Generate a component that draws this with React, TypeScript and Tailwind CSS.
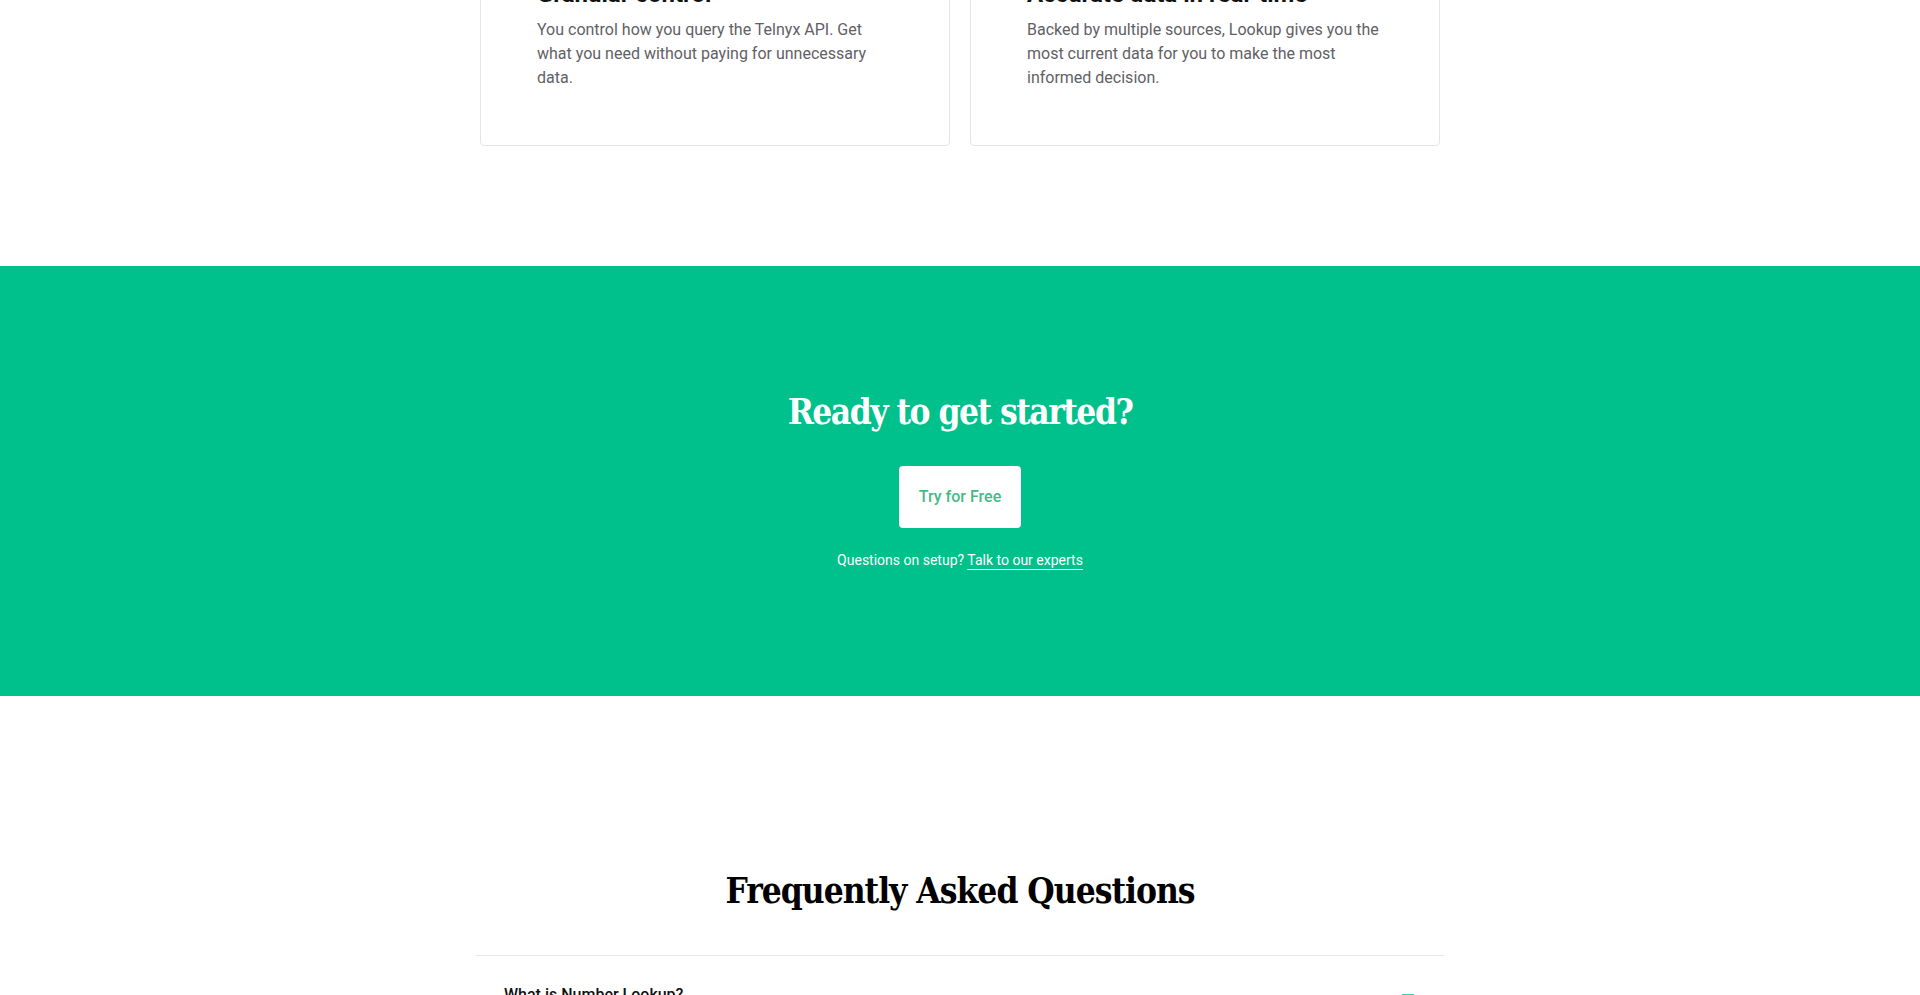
import React from "react";

const cards = [
  {
    title: "Granular control",
    body: "You control how you query the Telnyx API. Get what you need without paying for unnecessary data.",
  },
  {
    title: "Accurate data in real-time",
    body: "Backed by multiple sources, Lookup gives you the most current data for you to make the most informed decision.",
  },
];

export default function App() {
  return (
    <div className="min-h-screen bg-white font-['Roboto','Liberation_Sans',sans-serif] text-black">
      <section className="-mt-[79px] pb-[120px]">
        <div className="mx-auto grid w-[960px] grid-cols-2 gap-5">
          {cards.map((c) => (
            <div
              key={c.title}
              className="rounded-[4px] border border-[#e3e4e6] bg-white px-14 pt-14 pb-[55px]"
            >
              <h3 className="mb-2 text-[24px] leading-8 font-bold text-[#111111]">{c.title}</h3>
              <p className="text-[16px] leading-6 text-[#5f6166]">{c.body}</p>
            </div>
          ))}
        </div>
      </section>

      <section className="flex flex-col items-center bg-[#00c08b] pt-[123px] pb-[124px] text-white">
        <h2 className="font-['DejaVu_Serif_Condensed','DejaVu_Serif',serif] font-stretch-condensed text-[35px] leading-[46px] font-bold tracking-[-1.5px]">
          Ready to get started?
        </h2>
        <a
          href="#"
          className="mt-[31px] rounded-[4px] bg-white px-5 py-[21px] text-[16px] leading-5 font-medium text-[#45b987]"
        >
          Try for Free
        </a>
        <p className="mt-5 text-[14px] leading-6">
          Questions on setup?{" "}
          <a href="#" className="underline decoration-1 underline-offset-[4px]">
            Talk to our experts
          </a>
        </p>
      </section>

      <section className="pt-[174px]">
        <h2 className="text-center font-['DejaVu_Serif_Condensed','DejaVu_Serif',serif] font-stretch-condensed text-[35px] leading-[42px] font-bold tracking-[-1px] text-black">
          Frequently Asked Questions
        </h2>
        <div className="mx-auto mt-[43px] w-[968px] border-t border-[#e8e8e8]">
          <div className="flex items-center justify-between pt-[27px] pr-[30px] pl-7">
            <span className="text-[16px] leading-6 font-medium text-[#111111]">What is Number Lookup?</span>
            <span className="block h-[2px] w-3 bg-[#2fd09f]" />
          </div>
          <div className="h-40" />
        </div>
      </section>
    </div>
  );
}
